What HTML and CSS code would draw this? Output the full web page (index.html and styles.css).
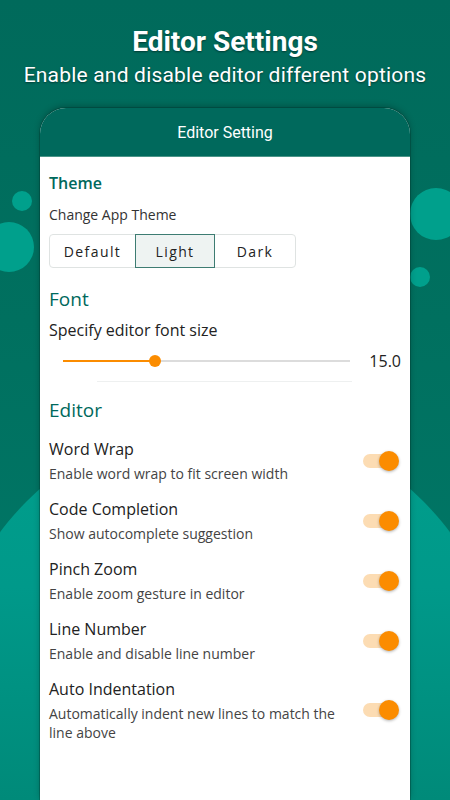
FILE: index.html
```html
<!DOCTYPE html>
<html lang="en">
<head>
    <meta charset="UTF-8">
    <meta name="viewport" content="width=device-width, initial-scale=1.0">
    <title>Editor Settings</title>
    <link rel="stylesheet" href="styles.css">
</head>
<body>
    <div class="screen">
        <div class="bg-wave"></div>
        <div class="dot dot--1"></div>
        <div class="dot dot--2"></div>
        <div class="dot dot--3"></div>
        <div class="dot dot--4"></div>

        <div class="promo">
            <h1 class="promo__title">Editor Settings</h1>
            <p class="promo__subtitle">Enable and disable editor different options</p>
        </div>

        <div class="phone">
            <div class="phone__bar">Editor Setting</div>
            <div class="phone__body">
                <h2 class="section section--theme">Theme</h2>
                <div class="label label--small">Change App Theme</div>
                <div class="segmented">
                    <button class="segmented__item">Default</button>
                    <button class="segmented__item segmented__item--active">Light</button>
                    <button class="segmented__item">Dark</button>
                </div>

                <h2 class="section">Font</h2>
                <div class="label">Specify editor font size</div>
                <div class="slider">
                    <div class="slider__track">
                        <div class="slider__fill" style="width: 32%"></div>
                        <div class="slider__thumb" style="left: 32%"></div>
                    </div>
                    <span class="slider__value">15.0</span>
                </div>
                <div class="slider__line"></div>

                <h2 class="section section--editor">Editor</h2>
                <div class="options">
                    <div class="option">
                        <div class="option__text">
                            <div class="option__title">Word Wrap</div>
                            <div class="option__desc">Enable word wrap to fit screen width</div>
                        </div>
                        <div class="switch"><span class="switch__thumb"></span></div>
                    </div>
                    <div class="option">
                        <div class="option__text">
                            <div class="option__title">Code Completion</div>
                            <div class="option__desc">Show autocomplete suggestion</div>
                        </div>
                        <div class="switch"><span class="switch__thumb"></span></div>
                    </div>
                    <div class="option">
                        <div class="option__text">
                            <div class="option__title">Pinch Zoom</div>
                            <div class="option__desc">Enable zoom gesture in editor</div>
                        </div>
                        <div class="switch"><span class="switch__thumb"></span></div>
                    </div>
                    <div class="option">
                        <div class="option__text">
                            <div class="option__title">Line Number</div>
                            <div class="option__desc">Enable and disable line number</div>
                        </div>
                        <div class="switch"><span class="switch__thumb"></span></div>
                    </div>
                    <div class="option">
                        <div class="option__text">
                            <div class="option__title">Auto Indentation</div>
                            <div class="option__desc">Automatically indent new lines to match the line above</div>
                        </div>
                        <div class="switch"><span class="switch__thumb"></span></div>
                    </div>
                </div>
            </div>
        </div>
    </div>
</body>
</html>
```

FILE: styles.css
```css
* {
    box-sizing: border-box;
}

body {
    margin: 0;
    font-family: 'Open Sans', 'Noto Sans', sans-serif;
}

.screen {
    position: relative;
    width: 450px;
    height: 800px;
    overflow: hidden;
    background: linear-gradient(180deg, #006a5b 0%, #00705f 40%, #007a6a 100%);
    display: flex;
    flex-direction: column;
    align-items: center;
}

/* background decoration */
.bg-wave {
    position: absolute;
    left: -55px;
    top: 419px;
    width: 560px;
    height: 560px;
    border-radius: 50%;
    background: linear-gradient(180deg, #009f8b 0%, #00998a 30%, #008a79 68%);
}

.dot {
    position: absolute;
    border-radius: 50%;
    background-color: #00a08c;
}

.dot--1 { left: 12px; top: 191px; width: 20px; height: 20px; }
.dot--2 { left: -16px; top: 222px; width: 50px; height: 50px; }
.dot--3 { left: 410px; top: 188px; width: 52px; height: 52px; }
.dot--4 { left: 410px; top: 267px; width: 20px; height: 20px; }

.promo {
    position: relative;
    text-align: center;
    color: #fff;
    padding-top: 23px;
    font-family: Roboto, 'Liberation Sans', sans-serif;
    text-shadow: 0 1px 2px rgba(0, 0, 0, 0.45);
}

.promo__title {
    margin: 0;
    font-size: 28px;
    line-height: 38px;
    font-weight: 700;
}

.promo__subtitle {
    margin: 0;
    font-size: 21px;
    line-height: 28px;
    font-weight: 400;
    letter-spacing: 0.2px;
}

.phone {
    position: relative;
    width: 370px;
    flex: 1;
    margin-top: 19px;
    border-radius: 26px 26px 0 0;
    overflow: hidden;
    background-color: #fff;
    box-shadow: 0 -2px 6px rgba(0, 0, 0, 0.25), 0 0 0 1px rgba(0, 60, 50, 0.35);
}

.phone__bar {
    height: 49px;
    background-color: #00695c;
    color: #fff;
    font-family: Roboto, 'Liberation Sans', sans-serif;
    font-size: 16px;
    display: flex;
    align-items: center;
    justify-content: center;
    border-bottom: 1px solid #4b9488;
}

.phone__body {
    padding: 14px 9px 0;
    color: #222;
}

.section {
    margin: 0;
    color: #00695c;
    font-size: 19px;
    line-height: 26px;
    font-weight: 400;
}

.section--theme {
    font-size: 16px;
    font-weight: 600;
    line-height: 24px;
}

.label {
    font-size: 16px;
    line-height: 22px;
    margin-top: 7px;
}

.label--small {
    font-size: 14px;
    margin-top: 9px;
    color: #333;
}

.segmented {
    display: flex;
    width: 247px;
    margin: 8px 0 18px;
    border: 1px solid #dfe3e2;
    border-radius: 4px;
}

.segmented__item {
    flex: 1;
    height: 34px;
    border: 1px solid transparent;
    background: none;
    font-family: 'Open Sans', 'Noto Sans', sans-serif;
    font-size: 14px;
    letter-spacing: 1.4px;
    color: #222;
    padding: 0;
    margin: -1px 0;
}

.segmented__item:first-child {
    flex: 0 0 85px;
}

.segmented__item--active {
    background-color: #eef3f2;
    border-color: #3d7c72;
}

.slider {
    display: flex;
    align-items: center;
    height: 34px;
    margin-top: 3px;
}

.slider__track {
    position: relative;
    margin-left: 14px;
    width: 287px;
    height: 2px;
    background-color: #dcdcdc;
}

.slider__fill {
    height: 2px;
    background-color: #fb8c00;
}

.slider__thumb {
    position: absolute;
    top: -5px;
    width: 12px;
    height: 12px;
    margin-left: -6px;
    border-radius: 50%;
    background-color: #fb8c00;
}

.slider__value {
    margin-left: auto;
    font-size: 16px;
}

.slider__line {
    margin: 3px 0 0 48px;
    width: 255px;
    height: 1px;
    background-color: #eef0f0;
}

.section--editor {
    margin-top: 15px;
}

.options {
    margin-top: 7px;
}

.option {
    display: flex;
    align-items: center;
    padding: 8px 0 7px;
}

.option__text {
    flex: 1;
    padding-right: 20px;
}

.option__title {
    font-size: 16px;
    line-height: 22px;
    color: #222;
}

.option__desc {
    font-size: 14px;
    line-height: 19px;
    color: #444;
    margin-top: 4px;
}

.switch {
    position: relative;
    width: 30px;
    height: 14px;
    margin-right: 8px;
    border-radius: 7px;
    background-color: #fcdcb3;
}

.switch__thumb {
    position: absolute;
    right: -6px;
    top: -3px;
    width: 20px;
    height: 20px;
    border-radius: 50%;
    background-color: #fb8c00;
    box-shadow: 0 1px 3px rgba(0, 0, 0, 0.3);
}
```
